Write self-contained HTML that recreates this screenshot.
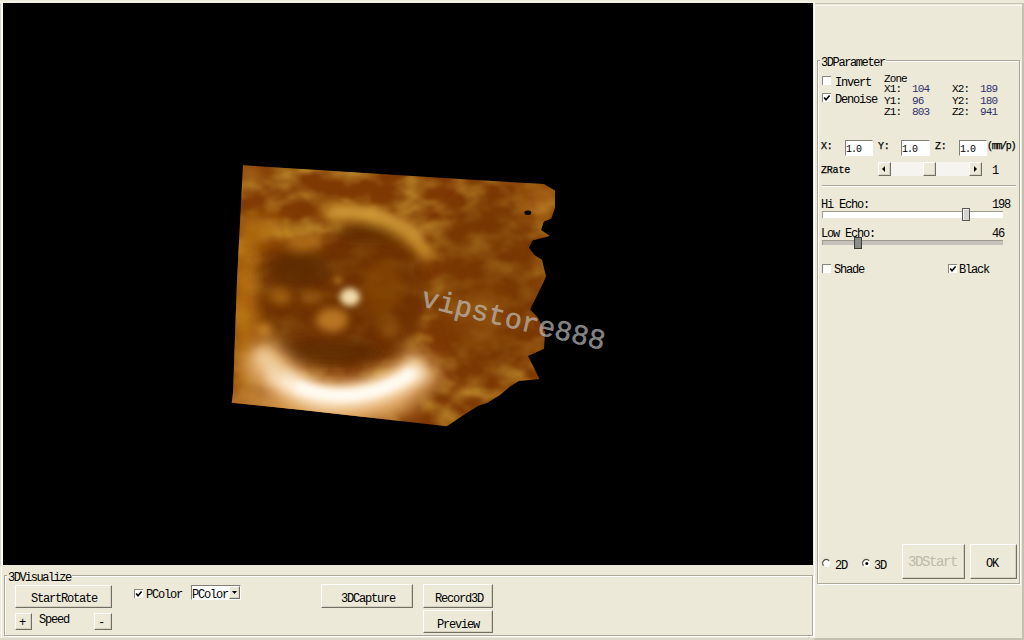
<!DOCTYPE html>
<html><head><meta charset="utf-8">
<style>
*{margin:0;padding:0;box-sizing:border-box}
html,body{width:1024px;height:640px;overflow:hidden;background:#ECE9D8}
body{position:relative;font-family:"Liberation Mono",monospace;font-size:12px;letter-spacing:-1.2px;color:#000}
.a{position:absolute}
.t{position:absolute;white-space:pre;line-height:12px}
.grp{position:absolute;border:1px solid #ACA899;box-shadow:inset 1px 1px 0 #fff, 1px 1px 0 #fff}
.btn{position:absolute;background:#ECE9D8;border-top:1px solid #fff;border-left:1px solid #fff;border-right:1px solid #716F64;border-bottom:1px solid #716F64;box-shadow:inset -1px -1px 0 #d6d2c2}
.cb{position:absolute;width:9px;height:9px;background:#fff;border-top:1px solid #8a877a;border-left:1px solid #8a877a}
.edit{position:absolute;background:#fff;border-top:1px solid #808076;border-left:1px solid #808076;border-right:1px solid #fff;border-bottom:1px solid #fff}
.num{color:#30306e}
.s{font-size:11px;letter-spacing:-0.9px}
.xs{font-size:10px;letter-spacing:-1px}
.ss{font-size:10px;letter-spacing:-0.2px;-webkit-text-stroke:0.25px #000}
</style></head><body>
<!-- viewport -->
<div class="a" style="left:0;top:1px;width:813px;height:2px;background:#f4f2e8"></div>
<div class="a" style="left:0;top:3px;width:1px;height:562px;background:#d8d5c8"></div>
<div class="a" style="left:1px;top:3px;width:2px;height:562px;background:#fbfaf4"></div>
<div class="a" style="left:3px;top:3px;width:810px;height:562px;background:#000"></div>
<svg class="a" style="left:0;top:0" width="1024" height="640" viewBox="0 0 1024 640">
<defs>
<clipPath id="vc"><path d="M243,165.3 L480,180.3 L543.8,184 L555,190.6 L555,207.5 L551.3,218.5 L544,221.5 L541,230 L550,236 L540,238.5 L532.5,240.5 L528.8,247.5 L534.4,255 L542,260 L544.7,271.3 L546,276 L544,281 L537.5,294.4 L530,309.4 L537.5,317 L545,332 L544,348.8 L528,356 L533.8,367.6 L539.4,379 L534.4,379.4 L518.7,381 L509.4,387 L500,395 L487.5,402.8 L478,406 L465.6,413.7 L456.2,420 L446.9,426.2 L400,421 L300,409.8 L231.7,402.8 L233,393 L237,280 Z"/></clipPath>
<filter id="tx" filterUnits="userSpaceOnUse" x="220" y="150" width="350" height="290">
<feTurbulence type="fractalNoise" baseFrequency="0.03 0.05" numOctaves="3" seed="5"/>
<feColorMatrix type="matrix" values="0 0 0 0 0.72  0 0 0 0 0.44  0 0 0 0 0.05  1.5 0 0 0 -0.6"/>
<feGaussianBlur stdDeviation="1.5"/>
</filter>
<filter id="f12" filterUnits="userSpaceOnUse" x="150" y="100" width="500" height="400"><feGaussianBlur stdDeviation="12"/></filter>
<filter id="f9" filterUnits="userSpaceOnUse" x="150" y="100" width="500" height="400"><feGaussianBlur stdDeviation="9"/></filter>
<filter id="f7" filterUnits="userSpaceOnUse" x="150" y="100" width="500" height="400"><feGaussianBlur stdDeviation="7"/></filter>
<filter id="f6" filterUnits="userSpaceOnUse" x="150" y="100" width="500" height="400"><feGaussianBlur stdDeviation="6"/></filter>
<filter id="f4" filterUnits="userSpaceOnUse" x="150" y="100" width="500" height="400"><feGaussianBlur stdDeviation="4"/></filter>
<filter id="f3" filterUnits="userSpaceOnUse" x="150" y="100" width="500" height="400"><feGaussianBlur stdDeviation="3"/></filter>
</defs>
<g clip-path="url(#vc)">
<rect x="220" y="150" width="350" height="290" fill="#7e3903"/>
<rect x="220" y="150" width="350" height="290" fill="#fff" filter="url(#tx)"/>
<g filter="url(#f9)">
<ellipse cx="246" cy="310" rx="14" ry="95" fill="#bb7412" fill-opacity="0.85"/>
<ellipse cx="320" cy="404" rx="100" ry="13" fill="#c8883a"/>
<ellipse cx="540" cy="200" rx="14" ry="14" fill="#a85e0e" fill-opacity="0.8"/>
<ellipse cx="262" cy="230" rx="22" ry="14" fill="#b87214" fill-opacity="0.8"/>
<ellipse cx="250" cy="176" rx="10" ry="7" fill="#d29832"/>
<ellipse cx="480" cy="315" rx="30" ry="25" fill="#a45e10" fill-opacity="0.6"/>
</g>
<g filter="url(#f12)">
<ellipse cx="488" cy="285" rx="55" ry="95" fill="#703002" fill-opacity="0.45"/>
</g>
<g filter="url(#f7)">
<path d="M257,268 Q266,246 330,245 Q342,226 404,228 Q426,245 425,300 Q418,340 392,363 Q330,372 282,358 Q257,338 257,268 Z" fill="#6a2e02" fill-opacity="0.72"/>
</g>
<g filter="url(#f6)">
<ellipse cx="300" cy="270" rx="30" ry="18" fill="#582602" fill-opacity="0.75"/>
<ellipse cx="368" cy="232" rx="36" ry="7" fill="#5a2702" fill-opacity="0.75"/>
<ellipse cx="325" cy="352" rx="55" ry="12" fill="#5a2702" fill-opacity="0.75"/>
<ellipse cx="303" cy="243" rx="18" ry="6" fill="#be7c1e"/>
<path d="M322,214 Q392,204 430,258" fill="none" stroke="#c8902c" stroke-width="13"/>
</g>
<g filter="url(#f4)">
<path d="M330,213 Q388,206 422,240" fill="none" stroke="#d6a040" stroke-width="6"/>
<ellipse cx="332" cy="320" rx="16" ry="12" fill="#b77420"/>
<ellipse cx="382" cy="288" rx="20" ry="28" fill="#8e4a08" fill-opacity="0.5"/>
<ellipse cx="281" cy="297" rx="11" ry="7" fill="#ae6a12" fill-opacity="0.8"/>
<ellipse cx="312" cy="298" rx="12" ry="6" fill="#a0600e" fill-opacity="0.7"/>
<ellipse cx="390" cy="330" rx="10" ry="8" fill="#a0600e" fill-opacity="0.6"/>
<ellipse cx="264" cy="330" rx="8" ry="7" fill="#c07e22"/>
</g>
<g filter="url(#f3)">
<ellipse cx="350" cy="297" rx="10" ry="9" fill="#f2dcaa"/>
<ellipse cx="338" cy="280" rx="4" ry="3" fill="#c8882e"/>
</g>
<g filter="url(#f9)">
<path d="M254,350 Q300,406 342,403 Q394,400 428,362" fill="none" stroke="#e6b070" stroke-width="40"/>
</g>
<g filter="url(#f6)">
<path d="M272,369 Q305,400 342,397 Q390,394 421,367" fill="none" stroke="#fff0d8" stroke-width="20"/>
<path d="M258,352 Q270,365 285,376" fill="none" stroke="#f0d0a0" stroke-width="14"/>
</g>
<g filter="url(#f3)">
<path d="M296,386 Q325,397 352,395 Q388,391 412,372" fill="none" stroke="#fffcf4" stroke-width="10"/>
</g>
</g>
<ellipse cx="527.8" cy="212.8" rx="3.5" ry="2.2" fill="#080400"/>
<ellipse cx="545.6" cy="225.5" rx="2.8" ry="3.5" fill="#080400"/>
<ellipse cx="470" cy="416" rx="3" ry="2.5" fill="#080400"/>
<text x="0" y="0" transform="translate(420,306) rotate(13.5)" font-family="Liberation Mono" font-size="28.5" style="letter-spacing:0" fill="#c0c0c0" fill-opacity="0.68" stroke="#c0c0c0" stroke-opacity="0.68" stroke-width="0.4">vipstore888</text>
</svg>


<!-- right panel outer -->
<div class="a" style="left:815px;top:3px;width:207px;height:1px;background:#c6c3b4"></div>
<div class="a" style="left:815px;top:5px;width:207px;height:1px;background:#f8f7f0"></div>
<div class="a" style="left:814px;top:2px;width:1px;height:636px;background:#fff"></div>
<div class="a" style="left:1022px;top:3px;width:2px;height:637px;background:#c4c1b2"></div>
<div class="a" style="left:814px;top:638px;width:210px;height:2px;background:#c4c1b2"></div>

<!-- 3DParameter group -->
<div class="grp" style="left:817px;top:60px;width:203px;height:524px"></div>
<div class="t" style="left:820px;top:57px;background:#ECE9D8;padding:0 1px;letter-spacing:-1.4px">3DParameter</div>

<div class="cb" style="left:822px;top:76px"></div>
<div class="t" style="left:835px;top:77px">Invert</div>
<div class="cb" style="left:822px;top:93px"></div>
<svg class="a" style="left:822px;top:93px" width="10" height="10"><path d="M2.2,4.5 L4,6.8 L7.6,2.4" fill="none" stroke="#000" stroke-width="1.6"/></svg>
<div class="t" style="left:835px;top:94px">Denoise</div>

<div class="t s" style="left:884px;top:73px">Zone</div>
<div class="t s" style="left:884px;top:83px">X1:</div><div class="t s num" style="left:912px;top:83px">104</div>
<div class="t s" style="left:952px;top:83px">X2:</div><div class="t s num" style="left:980px;top:83px">189</div>
<div class="t s" style="left:884px;top:95px">Y1:</div><div class="t s num" style="left:912px;top:95px">96</div>
<div class="t s" style="left:952px;top:95px">Y2:</div><div class="t s num" style="left:980px;top:95px">180</div>
<div class="t s" style="left:884px;top:106px">Z1:</div><div class="t s num" style="left:912px;top:106px">803</div>
<div class="t s" style="left:952px;top:106px">Z2:</div><div class="t s num" style="left:980px;top:106px">941</div>

<div class="t ss" style="left:821px;top:141px">X:</div>
<div class="edit" style="left:845px;top:140px;width:28px;height:16px"></div>
<div class="t xs" style="left:846px;top:144px">1.0</div>
<div class="t ss" style="left:878px;top:141px">Y:</div>
<div class="edit" style="left:901px;top:140px;width:29px;height:16px"></div>
<div class="t xs" style="left:902px;top:144px">1.0</div>
<div class="t ss" style="left:935px;top:141px">Z:</div>
<div class="edit" style="left:959px;top:140px;width:28px;height:16px"></div>
<div class="t xs" style="left:960px;top:144px">1.0</div>
<div class="t ss" style="left:987px;top:141px;letter-spacing:-1.3px;font-size:10px">(mm/p)</div>

<div class="t ss" style="left:821px;top:165px">ZRate</div>
<div class="a" style="left:878px;top:162px;width:104px;height:14px;background:#f5f4ee"></div>
<div class="btn" style="left:878px;top:162px;width:13px;height:14px"></div>
<svg class="a" style="left:878px;top:162px" width="13" height="14"><path d="M4,7 L7,4 L7,10 Z" fill="#000"/></svg>
<div class="btn" style="left:923px;top:162px;width:13px;height:14px"></div>
<div class="btn" style="left:969px;top:162px;width:13px;height:14px"></div>
<svg class="a" style="left:969px;top:162px" width="13" height="14"><path d="M8,7 L5,4 L5,10 Z" fill="#000"/></svg>
<div class="t" style="left:992px;top:165px">1</div>

<div class="a" style="left:822px;top:185px;width:194px;height:1px;background:#ACA899"></div>
<div class="a" style="left:822px;top:186px;width:194px;height:1px;background:#fff"></div>

<div class="t" style="left:821px;top:199px">Hi Echo:</div>
<div class="t" style="left:992px;top:199px">198</div>
<div class="a" style="left:822px;top:211px;width:181px;height:7px;background:#fff;border-top:1px solid #9d9a8c;border-left:1px solid #9d9a8c"></div>
<div class="a" style="left:962px;top:208px;width:8px;height:13px;background:#d4d3cf;border:1px solid #5a5a55;box-shadow:inset 1px 1px 0 #f2f2f0"></div>

<div class="t" style="left:821px;top:228px">Low Echo:</div>
<div class="t" style="left:992px;top:228px">46</div>
<div class="a" style="left:822px;top:240px;width:181px;height:5px;background:#c4c2ba;border-top:1px solid #9d9a8c;border-left:1px solid #9d9a8c"></div>
<div class="a" style="left:854px;top:237px;width:8px;height:12px;background:#8c8c88;border:1px solid #3a3a36"></div>

<div class="cb" style="left:822px;top:264px"></div>
<div class="t" style="left:834px;top:264px">Shade</div>
<div class="cb" style="left:948px;top:264px"></div>
<svg class="a" style="left:948px;top:264px" width="10" height="10"><path d="M2.2,4.5 L4,6.8 L7.6,2.4" fill="none" stroke="#000" stroke-width="1.6"/></svg>
<div class="t" style="left:959px;top:264px">Black</div>

<svg class="a" style="left:821px;top:557px" width="12" height="12"><circle cx="5.5" cy="6.3" r="3.6" fill="#fff"/><path d="M2.6,8.6 A3.6,3.6 0 0 1 8.1,3.7" fill="none" stroke="#55554f" stroke-width="1.3"/></svg>
<div class="t" style="left:835px;top:560px">2D</div>
<svg class="a" style="left:861px;top:557px" width="12" height="12"><circle cx="5.5" cy="6.3" r="3.6" fill="#fff"/><path d="M2.6,8.6 A3.6,3.6 0 0 1 8.1,3.7" fill="none" stroke="#55554f" stroke-width="1.3"/><circle cx="5.8" cy="6.6" r="1.5" fill="#000"/></svg>
<div class="t" style="left:874px;top:560px">3D</div>

<div class="btn" style="left:902px;top:544px;width:63px;height:35px"></div>
<div class="t" style="left:908px;top:555px;color:#bdbaa8;font-size:14px;letter-spacing:-1.4px;line-height:14px">3DStart</div>
<div class="btn" style="left:970px;top:544px;width:47px;height:35px"></div>
<div class="t" style="left:986px;top:558px;font-size:12px;letter-spacing:-1.2px">OK</div>

<!-- 3DVisualize group -->
<div class="a" style="left:1px;top:566px;width:1px;height:72px;background:#fff"></div>
<div class="grp" style="left:4px;top:575px;width:809px;height:61px"></div>
<div class="a" style="left:0;top:638px;width:814px;height:2px;background:#dcd9cb"></div>
<div class="t" style="left:7px;top:572px;background:#ECE9D8;padding:0 1px;letter-spacing:-1.5px">3DVisualize</div>

<div class="btn" style="left:15px;top:585px;width:97px;height:23px"></div>
<div class="t" style="left:31px;top:593px">StartRotate</div>
<div class="btn" style="left:15px;top:613px;width:17px;height:17px"></div>
<div class="t" style="left:19px;top:617px">+</div>
<div class="t" style="left:39px;top:614px">Speed</div>
<div class="btn" style="left:94px;top:613px;width:18px;height:17px"></div>
<div class="t" style="left:98px;top:617px">-</div>

<div class="cb" style="left:134px;top:589px"></div>
<svg class="a" style="left:134px;top:589px" width="10" height="10"><path d="M2.2,4.5 L4,6.8 L7.6,2.4" fill="none" stroke="#000" stroke-width="1.6"/></svg>
<div class="t" style="left:146px;top:589px">PColor</div>
<div class="edit" style="left:191px;top:585px;width:50px;height:15px"></div>
<div class="t" style="left:192px;top:589px">PColor</div>
<div class="btn" style="left:229px;top:586px;width:11px;height:13px"></div>
<svg class="a" style="left:229px;top:586px" width="11" height="13"><path d="M3,5 L8,5 L5.5,8 Z" fill="#000"/></svg>

<div class="btn" style="left:321px;top:584px;width:92px;height:24px"></div>
<div class="t" style="left:341px;top:593px">3DCapture</div>
<div class="btn" style="left:423px;top:584px;width:70px;height:24px"></div>
<div class="t" style="left:435px;top:593px">Record3D</div>
<div class="btn" style="left:423px;top:610px;width:70px;height:23px"></div>
<div class="t" style="left:437px;top:619px">Preview</div>

</body></html>
